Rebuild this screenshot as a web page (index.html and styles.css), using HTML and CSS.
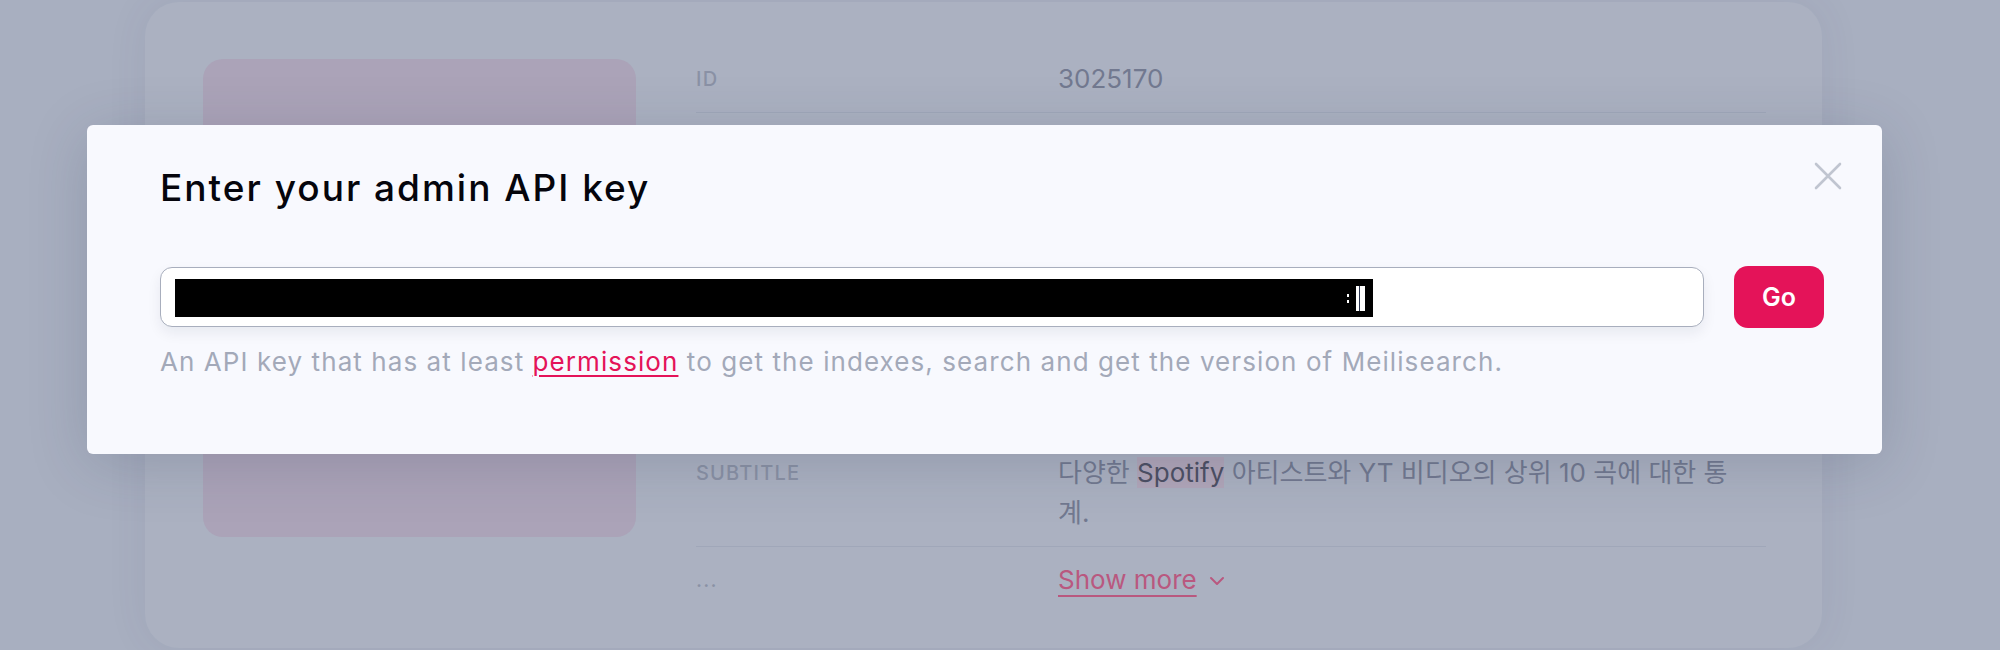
FILE: index.html
```html
<!DOCTYPE html>
<html lang="en">
<head>
<meta charset="utf-8">
<title>Meilisearch – Enter your admin API key</title>
<link rel="stylesheet" href="styles.css">
</head>
<body>
<div class="page">
  <div class="card">
    <div class="thumb"></div>
    <div class="fields">
      <div class="row first">
        <div class="label">ID</div>
        <div class="value">3025170</div>
      </div>
      <div class="row spacer"></div>
      <div class="row">
        <div class="label">Subtitle</div>
        <div class="value ko" lang="ko">다양한 <mark class="hl">Spotify</mark> 아티스트와 YT 비디오의 상위 10 곡에 대한 통<br>계.</div>
      </div>
      <div class="row last">
        <div class="label">...</div>
        <div class="value"><a class="more">Show more</a><svg class="chev" width="16" height="10" viewBox="0 0 16 10"><path d="M2 2 L8 8 L14 2" fill="none" stroke="#b9587f" stroke-width="2" stroke-linecap="round" stroke-linejoin="round"/></svg></div>
      </div>
    </div>
  </div>
</div>
<div class="modal">
  <button class="close" aria-label="Close"><svg width="30" height="30" viewBox="0 0 30 30"><path d="M3 3 L27 27 M27 3 L3 27" stroke="#c0c5d0" stroke-width="2.6" stroke-linecap="round"/></svg></button>
  <h2 class="modal-title">Enter your admin API key</h2>
  <div class="key-row">
    <div class="key-field"><span class="redacted"><span class="dots"></span><span class="bar"></span></span></div>
    <button class="go">Go</button>
  </div>
  <p class="hint">An API key that has at least <a class="link">permission</a> to get the indexes, search and get the version of Meilisearch.</p>
</div>
</body>
</html>
```

FILE: styles.css
```css
* { box-sizing: border-box; }
html, body { margin: 0; }
body {
  width: 2000px;
  height: 650px;
  overflow: hidden;
  position: relative;
  background: #a8afc0;
  font-family: Inter, "Noto Sans CJK KR", sans-serif;
}
.page { padding: 2px 178px 0 145px; }
.card {
  display: flex;
  align-items: flex-start;
  gap: 60px;
  height: 646px;
  padding: 57px 56px 32px 58px;
  background: #abb1c1;
  border-radius: 34px;
  box-shadow: 0 0 40px rgba(60, 70, 100, 0.08);
}
.thumb {
  flex: none;
  width: 433px;
  height: 478px;
  border-radius: 20px;
  background: #aba3b8;
}
.fields { flex: 1; }
.row {
  display: flex;
  padding: 13px 0;
  border-bottom: 1px solid #a0a7b9;
}
.row.first { padding-top: 0; }
.row.spacer { height: 327px; }
.row.last { border-bottom: none; }
.label {
  flex: none;
  width: 362px;
  font-size: 20px;
  line-height: 40px;
  font-weight: 500;
  letter-spacing: 1.2px;
  text-transform: uppercase;
  color: #8a91a5;
}
.value {
  flex: 1;
  font-size: 26px;
  line-height: 40px;
  color: #727990;
}
.ko { font-feature-settings: "palt"; }
.hl {
  background: #b1a6b9;
  color: #4d5064;
}
.more {
  color: #b9587f;
  text-decoration: underline;
  text-decoration-thickness: 2px;
  text-underline-offset: 6px;
}
.chev { margin-left: 12px; vertical-align: 3px; }

.modal {
  position: absolute;
  left: 87px;
  top: 125px;
  width: 1795px;
  height: 329px;
  padding: 41px 58px 0 73px;
  background: #f8f9fe;
  border-radius: 6px;
  box-shadow: 0 10px 60px rgba(40, 50, 80, 0.18);
}
.close {
  position: absolute;
  top: 36px;
  right: 39px;
  width: 30px;
  height: 30px;
  padding: 0;
  border: 0;
  background: none;
}
.close svg { display: block; }
.modal-title {
  margin: 0;
  font-size: 37px;
  line-height: 44px;
  font-weight: 500;
  letter-spacing: 2px;
  color: #05050c;
}
.key-row {
  display: flex;
  align-items: center;
  gap: 30px;
  margin-top: 56px;
}
.key-field {
  flex: 1;
  height: 60px;
  padding: 11px 14px;
  background: #fff;
  border: 1px solid #a8aebd;
  border-radius: 12px;
  box-shadow: 0 6px 14px rgba(20, 30, 60, 0.07);
}
.redacted {
  display: flex;
  align-items: center;
  justify-content: flex-end;
  width: 1198px;
  height: 38px;
  padding-right: 8px;
  background: #000;
}
.dots {
  width: 2px;
  height: 9px;
  margin-right: 7px;
  background: linear-gradient(#fff 0 3px, transparent 3px 6px, #fff 6px 9px);
}
.bar {
  width: 9px;
  height: 25px;
  background: linear-gradient(to right, #fff 0 3px, #2c3550 3px 4.5px, #fff 4.5px);
}
.go {
  flex: none;
  width: 90px;
  height: 62px;
  border: 0;
  border-radius: 14px;
  background: #e41359;
  color: #fff;
  font: 600 25px Inter, sans-serif;
}
.hint {
  margin: 16px 0 0;
  font-size: 26px;
  line-height: 36px;
  letter-spacing: 1.08px;
  color: #a3a9b9;
}
.link {
  color: #e41359;
  text-decoration: underline;
  text-decoration-thickness: 2px;
  text-underline-offset: 4px;
}
```
